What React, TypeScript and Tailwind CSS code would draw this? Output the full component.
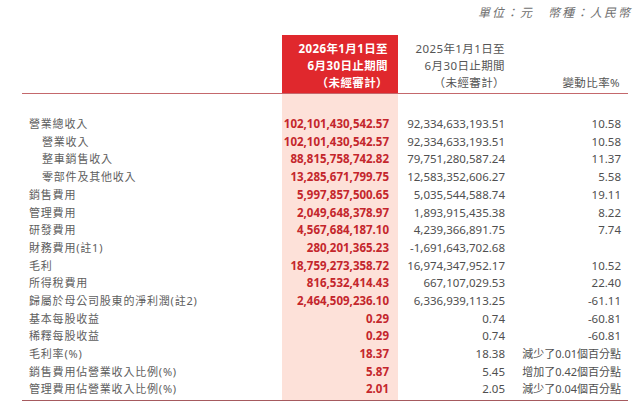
type Row = {
  label: string;
  indent?: boolean;
  cur: string;
  prev: string;
  change: string;
};

const rows: Row[] = [
  { label: '營業總收入', cur: '102,101,430,542.57', prev: '92,334,633,193.51', change: '10.58' },
  { label: '營業收入', indent: true, cur: '102,101,430,542.57', prev: '92,334,633,193.51', change: '10.58' },
  { label: '整車銷售收入', indent: true, cur: '88,815,758,742.82', prev: '79,751,280,587.24', change: '11.37' },
  { label: '零部件及其他收入', indent: true, cur: '13,285,671,799.75', prev: '12,583,352,606.27', change: '5.58' },
  { label: '銷售費用', cur: '5,997,857,500.65', prev: '5,035,544,588.74', change: '19.11' },
  { label: '管理費用', cur: '2,049,648,378.97', prev: '1,893,915,435.38', change: '8.22' },
  { label: '研發費用', cur: '4,567,684,187.10', prev: '4,239,366,891.75', change: '7.74' },
  { label: '財務費用(註1)', cur: '280,201,365.23', prev: '-1,691,643,702.68', change: '' },
  { label: '毛利', cur: '18,759,273,358.72', prev: '16,974,347,952.17', change: '10.52' },
  { label: '所得稅費用', cur: '816,532,414.43', prev: '667,107,029.53', change: '22.40' },
  { label: '歸屬於母公司股東的淨利潤(註2)', cur: '2,464,509,236.10', prev: '6,336,939,113.25', change: '-61.11' },
  { label: '基本每股收益', cur: '0.29', prev: '0.74', change: '-60.81' },
  { label: '稀釋每股收益', cur: '0.29', prev: '0.74', change: '-60.81' },
  { label: '毛利率(%)', cur: '18.37', prev: '18.38', change: '減少了0.01個百分點' },
  { label: '銷售費用佔營業收入比例(%)', cur: '5.87', prev: '5.45', change: '增加了0.42個百分點' },
  { label: '管理費用佔營業收入比例(%)', cur: '2.01', prev: '2.05', change: '減少了0.04個百分點' },
];

const cols = 'grid grid-cols-[260px_116px_107px_123px]';

export default function App() {
  return (
    <div
      className="w-[640px] h-[415px] bg-white overflow-hidden text-[#5e5e5e]"
      style={{ fontFamily: "'Noto Sans', 'Noto Sans CJK TC', sans-serif" }}
    >
      {/* Unit note */}
      <div className="h-[35px] flex justify-end items-start pt-[4px] pr-[8px]">
        <p className="italic text-[12px] tracking-[2px] text-[#707070] leading-[18px]">
          單位：元　幣種：人民幣
        </p>
      </div>

      <div className="ml-[22px] w-[606px]">
        {/* Column headers */}
        <div className={`${cols} h-[58.5px] border-b-[1.5px] border-[#c4686c] text-[11.5px] leading-[17px] tracking-[0.4px]`}>
          <div />
          <div className="bg-[#e0282d] flex flex-col items-end justify-end pr-[10px] pb-[2px] text-white font-bold">
            <span>2026年1月1日至</span>
            <span>6月30日止期間</span>
            <span>（未經審計）</span>
          </div>
          <div className="flex flex-col items-end justify-end pb-[2px] text-[#555]">
            <span>2025年1月1日至</span>
            <span>6月30日止期間</span>
            <span>（未經審計）</span>
          </div>
          <div className="flex flex-col items-end justify-end pr-[8px] pb-[2px] text-[#555]">
            <span>變動比率%</span>
          </div>
        </div>

        {/* Spacer under header */}
        <div className={`${cols} h-[21.6px]`}>
          <div />
          <div className="bg-[#fde1d9]" />
          <div />
          <div />
        </div>

        {/* Body */}
        {rows.map((r) => (
          <div key={r.label} className={`${cols} h-[17.7px] leading-[17.7px] whitespace-nowrap`}>
            <div className={`text-[11px] tracking-[0.8px] ${r.indent ? 'pl-[20px]' : 'pl-[7px]'}`}>
              {r.label}
            </div>
            <div className="bg-[#fde1d9] text-right pr-[9px] text-[11.5px] font-bold text-[#c4262c]">
              {r.cur}
            </div>
            <div className="text-right text-[11.5px] text-[#4f4f4f]">{r.prev}</div>
            <div className="text-right pr-[7px] text-[11.5px] text-[#4f4f4f]">
              {r.change.startsWith('減') || r.change.startsWith('增') ? (
                <span className="text-[11px]">{r.change}</span>
              ) : (
                r.change
              )}
            </div>
          </div>
        ))}

        {/* Closing rule */}
        <div className={`${cols} h-[2.5px] border-b-[1.5px] border-[#a65a5e]`}>
          <div />
          <div className="bg-[#fde1d9]" />
          <div />
          <div />
        </div>
      </div>
    </div>
  );
}
